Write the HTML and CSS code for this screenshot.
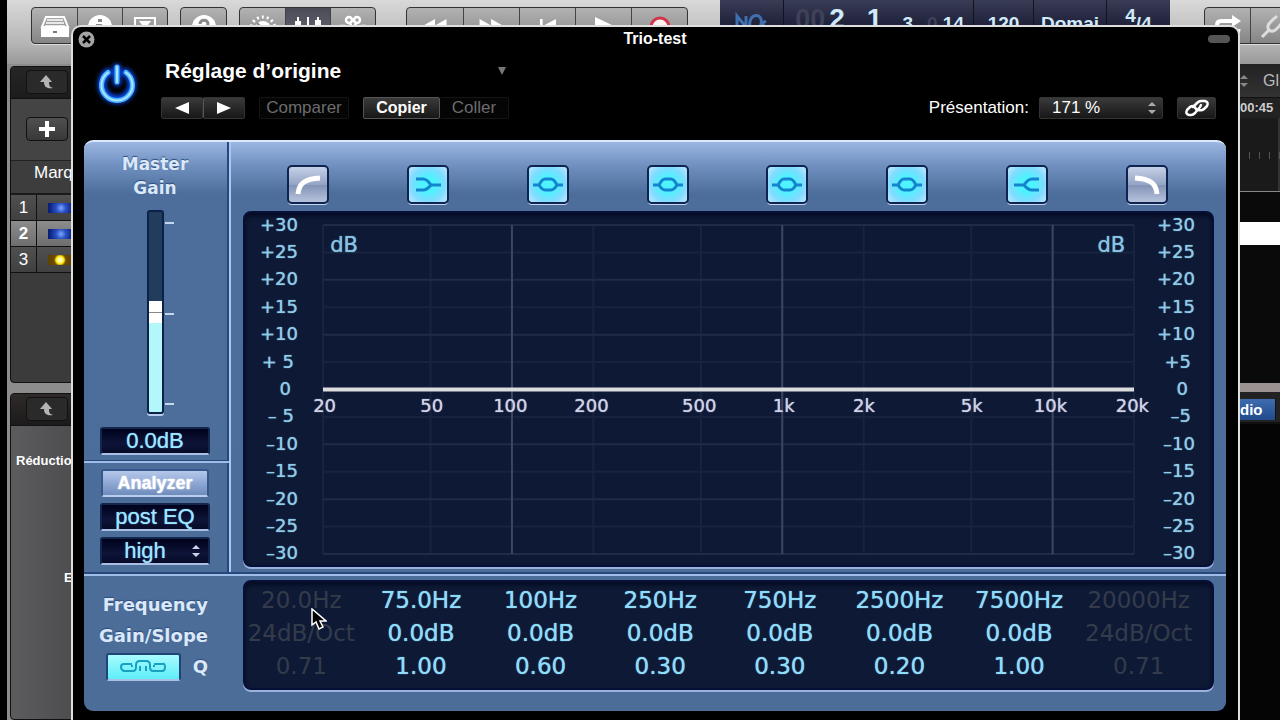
FILE: index.html
```html
<!DOCTYPE html>
<html lang="fr">
<head>
<meta charset="utf-8">
<title>Trio-test</title>
<link rel="stylesheet" href="styles.css">
</head>
<body>
<div class="app">
  <header class="toolbar">
    <div class="group">
      <button class="tool" aria-label="Bibliothèque"><svg width="30" height="24" viewBox="0 0 30 24"><path d="M6 3h18l4 10H2z" fill="none" stroke="#fff" stroke-width="2"/><path d="M7 6h16M6 9h18M5 12h20" stroke="#fff" stroke-width="1.5"/><path d="M1 13h28v10H1z" fill="#fff"/><path d="M13 17h4v2h-4z" fill="#777"/></svg></button>
      <button class="tool" aria-label="Infos"><svg width="26" height="26" viewBox="0 0 26 26"><circle cx="13" cy="14" r="12" fill="#fff"/><path d="M11 6h4v3h-4zM9 11h6v9h-4v-7H9z" fill="#888"/></svg></button>
      <button class="tool" aria-label="Barre d’outils"><svg width="24" height="20" viewBox="0 0 24 20"><path d="M2 2h20v17H2z" fill="none" stroke="#fff" stroke-width="2"/><path d="M6 5h12l-6 8z" fill="#fff"/></svg></button>
    </div>
    <div class="group">
      <button class="tool" aria-label="Aide"><svg width="26" height="26" viewBox="0 0 26 26"><circle cx="13" cy="14" r="12" fill="#fff"/><path d="M9 11c0-5 8-5 8 0 0 3-4 3-4 6" fill="none" stroke="#888" stroke-width="3"/></svg></button>
    </div>
    <div class="group">
      <button class="tool" aria-label="Smart Controls"><svg width="28" height="26" viewBox="0 0 28 26"><circle cx="14" cy="16" r="8" fill="#fff"/><circle cx="14" cy="16" r="12" fill="none" stroke="#fff" stroke-width="3" stroke-dasharray="2 3"/><path d="M8 10l6 6" stroke="#888" stroke-width="2"/></svg></button>
      <button class="tool tool-on" aria-label="Mixer"><svg width="30" height="26" viewBox="0 0 30 26"><path d="M5 4v22M15 4v22M25 4v22" stroke="#fff" stroke-width="2"/><path d="M2 8h6v7H2zM12 13h6v7h-6zM22 7h6v7h-6z" fill="#fff"/></svg></button>
      <button class="tool" aria-label="Éditeurs"><svg width="28" height="26" viewBox="0 0 28 26"><g fill="none" stroke="#fff" stroke-width="2.5"><circle cx="10" cy="7" r="3"/><circle cx="18" cy="7" r="3"/><path d="M11 10l6 14M17 10l-6 14M1 13h5M22 13h5"/></g></svg></button>
    </div>
    <div class="group group-transport">
      <button class="tool" aria-label="Rembobiner"><svg width="28" height="16" viewBox="0 0 28 18"><path d="M0 9L14 1v16zM13 9L27 1v16z" fill="#fff"/></svg></button>
      <button class="tool" aria-label="Avancer"><svg width="28" height="16" viewBox="0 0 28 18"><path d="M14 9L0 1v16zM27 9L13 1v16z" fill="#fff"/></svg></button>
      <button class="tool" aria-label="Début"><svg width="20" height="16" viewBox="0 0 20 18"><path d="M1 1h3v16H1zM4 9L19 1v16z" fill="#fff"/></svg></button>
      <button class="tool" aria-label="Lecture"><svg width="20" height="18" viewBox="0 0 20 18"><path d="M1 0l19 9-19 9z" fill="#fff"/></svg></button>
      <button class="tool" aria-label="Enregistrer"><svg width="22" height="22" viewBox="0 0 22 22"><circle cx="11" cy="12" r="9" fill="#fff2f2" stroke="#d2354a" stroke-width="3"/><circle cx="11" cy="18" r="6" fill="#e4374c"/></svg></button>
    </div>
    <div class="lcd">
      <div class="lcd-cell lcd-mode"><svg width="36" height="26" viewBox="0 0 36 26"><path d="M3 16V4l9 11V4M16 16c-3-16 14-16 11-4l5-3M27 12l5 3" fill="none" stroke="#3f6fae" stroke-width="3"/></svg></div>
      <div class="lcd-cell lcd-position"><span class="lcd-ghost">00</span><span class="lcd-big">2</span><span class="lcd-big lcd-beat">1</span><span class="lcd-small">3</span><span class="lcd-small lcd-end"><span class="lcd-ghost">0</span> 14</span></div>
      <div class="lcd-cell lcd-tempo lcd-small">120</div>
      <div class="lcd-cell lcd-key lcd-small">Domaj</div>
      <div class="lcd-cell lcd-signature"><span>4</span><span class="lcd-small">/4</span></div>
    </div>
    <div class="group group-end">
      <button class="tool" aria-label="Cycle"><svg width="28" height="24" viewBox="0 0 28 24"><path d="M3 16V11q0-4 4-4h12" fill="none" stroke="#fff" stroke-width="4"/><path d="M18 1l9 6-9 6z" fill="#fff"/><path d="M4 20h17q4 0 4-5" fill="none" stroke="#fff" stroke-width="3"/></svg></button>
      <button class="tool" aria-label="Accordeur"><svg width="26" height="26" viewBox="0 0 26 26"><path d="M2 24l7-7M9 17c-4-5 3-9 8-14M9 17c5 4 9-3 14-8" fill="none" stroke="#ddd" stroke-width="3"/></svg></button>
    </div>
  </header>

  <div class="workspace">
    <div class="left-side">
      <section class="tracks">
        <div class="pane-head"><button class="chip" aria-label="Remonter"><svg width="16" height="16" viewBox="0 0 16 16"><path d="M7 1l6 7h-3c0 4 1 5 4 6-6 1-9-1-9-6H1z" fill="#b4b4b4"/></svg></button></div>
        <div class="add-row"><button class="chip chip-add" aria-label="Ajouter une piste"><svg width="18" height="18" viewBox="0 0 18 18"><path d="M9 1v16M1 9h16" stroke="#fff" stroke-width="4"/></svg></button></div>
        <div class="marker-row">Marq</div>
        <div class="track"><span class="track-number">1</span><span class="track-icon"></span></div>
        <div class="track track-on"><span class="track-number">2</span><span class="track-icon"></span></div>
        <div class="track"><span class="track-number">3</span><span class="track-icon track-icon-gold"></span></div>
      </section>
      <section class="inspector">
        <div class="pane-head"><button class="chip" aria-label="Remonter"><svg width="16" height="16" viewBox="0 0 16 16"><path d="M7 1l6 7h-3c0 4 1 5 4 6-6 1-9-1-9-6H1z" fill="#b4b4b4"/></svg></button></div>
        <p class="inspector-text">Réductio</p>
        <p class="inspector-text inspector-text-end">E</p>
      </section>
    </div>
    <div class="right-side">
      <div class="snap"><svg width="8" height="14" viewBox="0 0 8 14"><path d="M0 5l4-4 4 4zM0 9l4 4 4-4z" fill="#888"/></svg><span>Gl</span></div>
      <div class="ruler-time">00:45</div>
      <div class="ruler"></div>
      <div class="lane"></div>
      <div class="lane lane-on"></div>
      <div class="lane lane-empty"></div>
      <div class="divider"></div>
      <div class="tabs"><button class="tab">dio</button></div>
    </div>
  </div>
</div>

<main class="plugin">
  <div class="titlebar">
    <button class="close" aria-label="Fermer"><svg width="17" height="17" viewBox="0 0 17 17"><circle cx="8.500" cy="8.500" r="8" fill="#a4a4a4"/><path d="M5 5l7 7M12 5l-7 7" stroke="#000" stroke-width="2.500"/></svg></button>
    <h1 class="title">Trio-test</h1>
    <button class="pill" aria-label="Réduire"></button>
  </div>

  <div class="controls">
    <button class="power" aria-label="Activer"><svg width="48" height="48" viewBox="0 0 48 48"><g fill="none" stroke-linecap="round"><g class="power-glow"><path d="M24 9v14M15 13.500a15 15 0 1 0 18 0" stroke="#0a50ff" stroke-width="8"/></g><path d="M24 8v15M15 13.500a15.500 15.500 0 1 0 18 0" stroke="#4db4ff" stroke-width="5"/><path d="M24 8v15M15 13.500a15.500 15.500 0 1 0 18 0" stroke="#a8e4ff" stroke-width="2"/></g></svg></button>
    <div class="settings">
      <div class="preset">
        <select class="preset-select" aria-label="Réglage"><option>Réglage d’origine</option></select>
        <svg width="10" height="8" viewBox="0 0 10 8"><path d="M1 0h8L5 8z" fill="#777"/></svg>
      </div>
      <div class="actions">
        <div class="joined">
          <button class="dark nav" aria-label="Précédent"><svg width="14" height="14" viewBox="0 0 14 14"><path d="M14 1v12L0 7z" fill="#fff"/></svg></button>
          <button class="dark nav" aria-label="Suivant"><svg width="14" height="14" viewBox="0 0 14 14"><path d="M0 1v12l14-6z" fill="#fff"/></svg></button>
        </div>
        <button class="dark compare" disabled>Comparer</button>
        <div class="joined">
          <button class="dark copy">Copier</button>
          <button class="dark paste" disabled>Coller</button>
        </div>
        <label class="view-label" for="view">Présentation:</label>
        <div class="view">
          <select class="dark view-select" id="view"><option>171 %</option></select>
          <svg width="8" height="12" viewBox="0 0 8 12"><path d="M0 4l4-4 4 4zM0 8l4 4 4-4z" fill="#aaa"/></svg>
        </div>
        <button class="dark link" aria-label="Lier"><svg width="26" height="18" viewBox="0 0 26 18"><g fill="none" stroke="#fff" stroke-width="2.500" stroke-linecap="round" stroke-linejoin="round"><path d="M9 8l4-4q2-2 4-2h4q4 1 2 5l-3 3q-2 2-6 1"/><path d="M17 6l-1 2-5 6q-2 2-4 2H5q-4-1-2-5l3-3q1-1 4-1l2 3"/></g></svg></button>
      </div>
    </div>
  </div>

  <div class="eq">
    <aside class="side">
      <section class="gain">
        <label class="gain-title" for="gain">Master<br>Gain</label>
        <div class="fader">
          <input class="slider" id="gain" type="range" min="-30" max="30" value="0">
          <div class="ticks"><i></i><i></i><i></i></div>
        </div>
        <input class="field" type="text" size="6" value="0.0dB" aria-label="Master Gain">
      </section>
      <section class="analyzer">
        <button class="analyzer-button">Analyzer</button>
        <button class="field">post EQ</button>
        <div class="resolution">
          <select class="field resolution-select" aria-label="Résolution"><option>high</option></select>
          <svg width="8" height="14" viewBox="0 0 8 14"><path d="M0 5l4-4 4 4zM0 9l4 4 4-4z" fill="#ccd2ea"/></svg>
        </div>
      </section>
    </aside>

    <section class="curve">
      <div class="bands">
        <button class="band" aria-label="Passe-haut"><svg width="28" height="22" viewBox="0 0 28 22"><path d="M4 20C5 9 11 5 26 4" fill="none" stroke="#fff" stroke-width="5"/></svg></button>
        <button class="band band-on" aria-label="Plateau grave"><svg width="28" height="22" viewBox="0 0 28 22"><path d="M2 5h7q4 0 8 6h10M2 16h7q4 0 8-5" fill="none" stroke="#1584cf" stroke-width="3"/></svg></button>
        <button class="band band-on" aria-label="Cloche 1"><svg width="30" height="22" viewBox="0 0 30 22"><path d="M0 11h6q3-6 6-6h6q3 0 6 6h6M6 11q3 5 6 5h6q3 0 6-5" fill="none" stroke="#1584cf" stroke-width="3"/></svg></button>
        <button class="band band-on" aria-label="Cloche 2"><svg width="30" height="22" viewBox="0 0 30 22"><path d="M0 11h6q3-6 6-6h6q3 0 6 6h6M6 11q3 5 6 5h6q3 0 6-5" fill="none" stroke="#1584cf" stroke-width="3"/></svg></button>
        <button class="band band-on" aria-label="Cloche 3"><svg width="30" height="22" viewBox="0 0 30 22"><path d="M0 11h6q3-6 6-6h6q3 0 6 6h6M6 11q3 5 6 5h6q3 0 6-5" fill="none" stroke="#1584cf" stroke-width="3"/></svg></button>
        <button class="band band-on" aria-label="Cloche 4"><svg width="30" height="22" viewBox="0 0 30 22"><path d="M0 11h6q3-6 6-6h6q3 0 6 6h6M6 11q3 5 6 5h6q3 0 6-5" fill="none" stroke="#1584cf" stroke-width="3"/></svg></button>
        <button class="band band-on" aria-label="Plateau aigu"><svg width="28" height="22" viewBox="0 0 28 22"><path d="M26 5h-7q-4 0-8 6H1M26 16h-7q-4 0-8-5" fill="none" stroke="#1584cf" stroke-width="3"/></svg></button>
        <button class="band" aria-label="Passe-bas"><svg width="28" height="22" viewBox="0 0 28 22"><path d="M24 20C23 9 17 5 2 4" fill="none" stroke="#fff" stroke-width="5"/></svg></button>
      </div>
      <div class="graph screen">
        <div class="scale"><span>+30</span><span>+25</span><span>+20</span><span>+15</span><span>+10</span><span class="one">+&nbsp;5</span><span class="zero">0</span><span class="one">–&nbsp;5</span><span>–10</span><span>–15</span><span>–20</span><span>–25</span><span>–30</span></div>
        <div class="plot">
          <svg class="grid">
            <g class="line-faint">
              <line x1="0" x2="100%" y1="8.33%" y2="8.33%"/><line x1="0" x2="100%" y1="25%" y2="25%"/><line x1="0" x2="100%" y1="41.67%" y2="41.67%"/><line x1="0" x2="100%" y1="58.33%" y2="58.33%"/><line x1="0" x2="100%" y1="75%" y2="75%"/><line x1="0" x2="100%" y1="91.67%" y2="91.67%"/>
              <line x1="0" x2="0" y1="0" y2="100%"/><line x1="13.26%" x2="13.26%" y1="0" y2="100%"/><line x1="33.33%" x2="33.33%" y1="0" y2="100%"/><line x1="46.6%" x2="46.6%" y1="0" y2="100%"/><line x1="66.67%" x2="66.67%" y1="0" y2="100%"/><line x1="79.93%" x2="79.93%" y1="0" y2="100%"/><line x1="100%" x2="100%" y1="0" y2="100%"/>
            </g>
            <g class="line-mid">
              <line x1="0" x2="100%" y1="0" y2="0"/><line x1="0" x2="100%" y1="16.67%" y2="16.67%"/><line x1="0" x2="100%" y1="33.33%" y2="33.33%"/><line x1="0" x2="100%" y1="66.67%" y2="66.67%"/><line x1="0" x2="100%" y1="83.33%" y2="83.33%"/><line x1="0" x2="100%" y1="100%" y2="100%"/>
            </g>
            <g class="line-strong">
              <line x1="23.3%" x2="23.3%" y1="0" y2="100%"/><line x1="56.63%" x2="56.63%" y1="0" y2="100%"/><line x1="89.97%" x2="89.97%" y1="0" y2="100%"/>
            </g>
            <line class="response" x1="0" x2="100%" y1="50%" y2="50%"/>
            <g class="hertz">
              <text x="0.2%" y="50%" dy="22">20</text><text x="13.4%" y="50%" dy="22">50</text><text x="23.1%" y="50%" dy="22">100</text><text x="33.1%" y="50%" dy="22">200</text><text x="46.4%" y="50%" dy="22">500</text><text x="56.8%" y="50%" dy="22">1k</text><text x="66.7%" y="50%" dy="22">2k</text><text x="80%" y="50%" dy="22">5k</text><text x="89.7%" y="50%" dy="22">10k</text><text x="99.8%" y="50%" dy="22">20k</text>
            </g>
            <g class="unit"><text x="2.6%" y="27">dB</text><text x="97.2%" y="27">dB</text></g>
          </svg>
        </div>
        <div class="scale"><span>+30</span><span>+25</span><span>+20</span><span>+15</span><span>+10</span><span class="one">+5</span><span class="zero">0</span><span class="one">–5</span><span>–10</span><span>–15</span><span>–20</span><span>–25</span><span>–30</span></div>
      </div>
    </section>

    <section class="row-names">
      <span id="freq">Frequency</span>
      <span id="slope">Gain/Slope</span>
      <div class="q-row">
        <button class="chain" aria-label="Lier gain et Q"><svg width="46" height="14" viewBox="0 0 46 14"><g fill="none" stroke="#17a0bf" stroke-width="2"><path d="M12 4H4q-3 0-3 3t3 4h9q3 0 3-4V5q0-4 4-4h6q4 0 4 4v2q0 4 3 4h9q3 0 3-4t-3-3h-8"/><path d="M12 7V5M20 11V6M26 11V6M34 7V5"/></g></svg></button>
        <span id="q">Q</span>
      </div>
    </section>

    <section class="values">
      <table class="screen">
        <tbody>
          <tr aria-labelledby="freq"><td class="off">20.0Hz</td><td>75.0Hz</td><td>100Hz</td><td>250Hz</td><td>750Hz</td><td>2500Hz</td><td>7500Hz</td><td class="off">20000Hz</td></tr>
          <tr aria-labelledby="slope"><td class="off">24dB/Oct</td><td>0.0dB</td><td>0.0dB</td><td>0.0dB</td><td>0.0dB</td><td>0.0dB</td><td>0.0dB</td><td class="off">24dB/Oct</td></tr>
          <tr aria-labelledby="q"><td class="off">0.71</td><td>1.00</td><td>0.60</td><td>0.30</td><td>0.30</td><td>0.20</td><td>1.00</td><td class="off">0.71</td></tr>
        </tbody>
      </table>
    </section>
  </div>
</main>

<svg class="cursor" width="16" height="22" viewBox="0 0 16 22"><path d="M1 1v16l4-3 3 7 4-2-3-6h6z" fill="#000" stroke="#fff" stroke-width="1.500"/></svg>
</body>
</html>
```
FILE: styles.css
```css
* { box-sizing: border-box; }

body {
  margin: 0;
  min-height: 100vh;
  position: relative;
  overflow: hidden;
  background: #000;
  color: #fff;
  font-family: "Liberation Sans", Arial, sans-serif;
}

button, select, input { font: inherit; color: inherit; margin: 0; padding: 0; border: 0; border-radius: 0; }
button { display: flex; align-items: center; justify-content: center; }
select { appearance: none; }
svg { display: block; flex: none; }

/* Host application */
.app {
  display: flex;
  flex-direction: column;
  min-height: 100vh;
  margin-left: 7px;
  background: #999;
}

.toolbar {
  display: flex;
  align-items: flex-start;
  gap: 12px;
  height: 64px;
  padding-left: 24px;
  overflow: hidden;
  background: linear-gradient(#d9d9d9, #b4b4b4 70%, #989898);
}

.group {
  display: flex;
  flex: none;
  margin-top: 7px;
  border: 1px solid #333;
  border-radius: 4px;
  background: linear-gradient(#b2b2b2, #858585);
  box-shadow: 0 1px 0 #ddd;
}
.group-transport { margin-left: 18px; }
.tool { width: 45px; height: 35px; background: none; }
.tool + .tool { border-left: 1px solid #444; }
.tool-on { background: linear-gradient(#4b4b57, #6a6a78); }
.group-transport .tool { width: 56px; }
.group-end { margin-left: 22px; }

.lcd {
  display: flex;
  flex: 1 0 450px;
  height: 52px;
  margin-left: 20px;
  overflow: hidden;
  background: linear-gradient(#393c55, #1d2038 50%, #14172a);
  color: #cfeafa;
  font-weight: bold;
}
.lcd-cell { display: flex; flex: none; justify-content: center; border-right: 1px solid #11131f; }
.lcd-mode { width: 64px; padding-top: 12px; }
.lcd-position { width: 190px; justify-content: flex-end; padding-right: 9px; }
.lcd-ghost { color: #3d415a; font-size: 27px; line-height: 38px; }
.lcd-big { padding-left: 4px; font-size: 28px; line-height: 38px; }
.lcd-beat { padding: 0 20px 0 22px; }
.lcd-small { font-size: 19px; line-height: 48px; }
.lcd-end { padding-left: 14px; }
.lcd-end .lcd-ghost { font-size: 19px; line-height: 48px; }
.lcd-tempo { width: 60px; }
.lcd-key { width: 73px; }
.lcd-signature { flex: 1; border: 0; font-size: 19px; line-height: 32px; }

.workspace { display: grid; grid-template-columns: 66px 1fr 40px; flex: 1; background: #8c8c8c; }

.left-side { display: grid; grid-template-rows: 317px 1fr; gap: 10px; padding: 2px 0 0 3px; }
.tracks, .inspector { border: 1px solid #111; background: #3b3b3b; border-radius: 4px 0 0 4px; }
.inspector { background: linear-gradient(90deg, #5c5c5e, #4b4b4d); }
.pane-head { display: flex; height: 32px; padding: 3px 15px; background: linear-gradient(#262626, #1c1c1c); border-bottom: 1px solid #111; }
.inspector .pane-head { background: linear-gradient(#2e2a29, #1c1a1a); }
.chip { flex: none; width: 42px; height: 24px; border: 1px solid #111; border-radius: 4px; background: #2a2a2a; }
.chip-add { background: linear-gradient(#505050, #383838); }
.add-row { height: 62px; padding: 18px 15px; background: #444; border-bottom: 1px solid #222; }
.marker-row { height: 34px; padding-left: 23px; font-size: 17px; line-height: 24px; background: #3d3d3d; border-bottom: 2px solid #1a1a1a; }
.track { display: grid; grid-template-columns: 26px 1fr; align-items: stretch; height: 26px; border-bottom: 1px solid #111; background: linear-gradient(#505050, #404040); }
.track-on { background: linear-gradient(#8c8c8c, #6e6e6e); }
.track-number { border-right: 1px solid #111; font-size: 17px; line-height: 26px; text-align: center; }
.track-on .track-number { font-weight: bold; }
.track-icon { height: 10px; margin: 8px 0 0 11px; background: radial-gradient(circle at 13px 5px, #7fa8ff, #2950c4 5px, #0a1f78 12px); }
.track-icon-gold { background: radial-gradient(circle at 12px 5px, #fffbb0 2px, #ffe300 4px, #6a4a00 6px, #4a3300); }
.inspector-text { margin: 26px 0 0 5px; font-size: 13px; line-height: 17px; font-weight: bold; }
.inspector-text-end { margin: 100px 0 0 53px; }

.right-side { display: flex; flex-direction: column; grid-column: 3; overflow: hidden; background: #050505; }
.snap { display: flex; align-items: center; gap: 15px; height: 34px; background: linear-gradient(#222, #333); color: #bbb; font-size: 16px; border-bottom: 1px solid #111; }
.ruler-time { height: 20px; font-size: 13px; font-weight: bold; line-height: 20px; color: #ccc; background: #222; }
.ruler { height: 74px; background: repeating-linear-gradient(90deg, transparent 0 9px, #555 9px 10px) 0 34px / 100% 7px no-repeat, linear-gradient(90deg, transparent 38px, #333 38px) , #1a1a1a; border-bottom: 1px solid #888; }
.lane { height: 30px; background: #0a0a0a; }
.lane-on { height: 23px; background: #fff; }
.lane-empty { height: 138px; }
.divider { height: 9px; background: #9a9392; }
.tabs { height: 32px; padding-top: 7px; background: #222; border-bottom: 2px solid #111; }
.tab { justify-content: flex-start; width: 36px; height: 21px; border-right: 1px solid #111; background: linear-gradient(#3d6db0, #1f4a8c); font-size: 15px; font-weight: bold; }

/* Plug-in window floats above the host */
.plugin {
  position: absolute;
  inset: 25px 40px 0 71px;
  display: flex;
  flex-direction: column;
  padding-bottom: 9px;
  border: 2px solid #dedede;
  border-bottom: 0;
  border-radius: 10px 10px 0 0;
  background: #000;
}

.titlebar { display: grid; grid-template-columns: 24px 1fr 24px; align-items: center; height: 24px; padding: 0 6px 0 5px; }
.close { justify-self: start; background: none; }
.title { margin: 0; font-size: 16px; line-height: 24px; text-align: center; }
.pill { width: 22px; height: 8px; border-radius: 4px; background: #555; }

.controls { display: flex; gap: 20px; padding: 6px 22px 21px 20px; }
.power { flex: none; width: 48px; height: 48px; margin-top: 2px; background: none; }
.power-glow { filter: blur(2px); }
.settings { flex: 1; display: flex; flex-direction: column; gap: 12px; }
.preset { display: grid; grid-template-columns: 344px; align-items: center; padding-left: 4px; }
.preset > * { grid-area: 1 / 1; }
.preset svg { justify-self: end; margin-right: 2px; pointer-events: none; }
.preset-select { height: 26px; margin-bottom: 2px; background: #000; font-size: 21px; font-weight: bold; }

.actions { display: flex; align-items: center; gap: 14px; font-size: 16px; }
.joined { display: flex; }
.dark { height: 22px; border: 1px solid #333; border-radius: 2px; background: linear-gradient(#3a3a3a, #171717); }
.joined .dark + .dark { border-left: 0; }
.dark:disabled { border-color: #151515; background: #050505; color: #6c6c6c; }
.nav { width: 42px; }
.joined .nav + .nav { border-left: 1px solid #555; }
.compare { width: 90px; font-size: 17px; }
.copy { width: 77px; border-color: #555; font-weight: bold; }
.paste { width: 69px; font-size: 17px; }
.view-label { margin-left: auto; font-size: 17px; }
.view { display: grid; grid-template-columns: 124px; align-items: center; margin-left: -4px; }
.view > * { grid-area: 1 / 1; }
.view svg { justify-self: end; margin-right: 7px; pointer-events: none; }
.view-select { padding-left: 12px; font-size: 17px; line-height: 18px; }
.link { width: 39px; }

/* EQ face */
.eq {
  flex: 1;
  display: grid;
  grid-template: minmax(0, 1fr) 137px / 147px 1fr;
  min-height: 0;
  margin: 0 12px 0 11px;
  border-top: 2px solid #dbe7fb;
  border-radius: 9px;
  overflow: hidden;
  background: linear-gradient(#9bb6e2, #6f8fbe 24px, #4d6e9b 52px, #4b6d98);
  font-family: "DejaVu Sans", Verdana, sans-serif;
}

.side { display: grid; grid-template-rows: minmax(0, 1fr) 113px; border-right: 2px solid #a9c8f2; box-shadow: inset -2px 0 0 #27487c; }
.gain, .analyzer { display: flex; flex-direction: column; align-items: center; min-height: 0; padding-right: 3px; }
.gain-title { margin-top: 10px; color: #dbe8fa; font-size: 17px; line-height: 24px; font-weight: bold; text-align: center; text-shadow: 0 -1px 1px #2c4c7c; }
.fader { flex: 1; display: flex; gap: 1px; min-height: 0; margin: 10px 0 13px 10px; }
.slider {
  appearance: none;
  writing-mode: vertical-lr;
  direction: rtl;
  width: 17px;
  height: 100%;
  border: 2px solid #0c2148;
  border-radius: 3px;
  background: linear-gradient(#223c5e 50%, #b2f8fb 50%);
  box-shadow: 0 2px 0 #b9cdee;
}
.slider::-webkit-slider-thumb {
  appearance: none;
  width: 13px;
  height: 22px;
  background: linear-gradient(#fff 11px, #888 11px 12px, #fff 12px);
}
.ticks { display: flex; flex-direction: column; justify-content: space-between; width: 9px; padding: 12px 0 9px; }
.ticks i { height: 2px; background: #c4d6ee; }

.field {
  width: 110px;
  height: 28px;
  border: 2px solid #12264e;
  border-bottom: 2px solid #a9bfe4;
  border-radius: 3px;
  background: linear-gradient(#00021c, #0e1438 60%, #070b28);
  color: #9fe6ff;
  font-family: "Liberation Sans", Arial, sans-serif;
  font-size: 22px;
  line-height: 24px;
  text-align: center;
  text-shadow: 0 0 1px #6fc4ff;
}
.gain .field { margin-bottom: 6px; }
.analyzer { gap: 6px; padding-top: 6px; border-top: 2px solid #a0bdea; box-shadow: 0 -1px 0 #27487c; }
.analyzer-button {
  width: 108px;
  height: 28px;
  border: 2px solid #35578c;
  border-bottom-color: #b9cdee;
  border-radius: 3px;
  background: linear-gradient(#b5c8ea, #8fa8d4 50%, #6f8cbc);
  color: #fff;
  font-family: "Liberation Sans", Arial, sans-serif;
  font-size: 18px;
  font-weight: bold;
  text-shadow: 0 0 2px #fff;
}
.resolution { display: grid; align-items: center; }
.resolution > * { grid-area: 1 / 1; }
.resolution svg { justify-self: end; margin-right: 10px; pointer-events: none; }
.resolution-select { padding-right: 20px; }

.curve { display: flex; flex-direction: column; min-height: 0; padding: 0 12px 7px; }
.bands { display: grid; grid-template-columns: repeat(8, 1fr); justify-items: center; padding: 23px 7px 7px 5px; }
.band {
  width: 42px;
  height: 39px;
  border: 2px solid #0e2350;
  border-radius: 5px;
  background: linear-gradient(#c5d0e6, #94a5c5 50%, #8293b6 52%, #b6c3dc);
  box-shadow: 0 2px 0 -1px #c6d6f0;
}
.band-on { background: radial-gradient(circle, #4ff2ff 30%, #7fdcff 65%, #c3e6ff); }

.screen { border: 2px solid #060f38; border-radius: 8px; background: #0e1a35; box-shadow: 0 2px 0 #9ab2dd, inset 0 3px 4px #050b22; }
.graph { flex: 1; display: grid; grid-template: minmax(0, 1fr) / 53px 1fr 61px; min-height: 0; padding-right: 17px; }
.plot { min-height: 0; margin: 12px 0 11px 25px; }
.grid { width: 100%; height: 100%; overflow: visible; }
.line-faint { stroke: #18243f; stroke-width: 2; }
.line-mid { stroke: #202b45; stroke-width: 2; }
.line-strong { stroke: #3c4662; stroke-width: 2; }
.response { stroke: #dcdcdf; stroke-width: 4; }
.hertz { fill: #cfd2e6; font-size: 18px; text-anchor: middle; text-shadow: 0 0 1px #cfd2e6; }
.unit { fill: #86c4e2; font-size: 21px; text-anchor: middle; text-shadow: 0 0 1px #86c4e2; }
.scale { display: grid; grid-auto-rows: 1fr; align-items: center; margin: -2px 0; color: #8fcbe8; font-size: 18px; line-height: 20px; text-align: right; text-shadow: 0 0 1px #8fcbe8; }
.one { padding-right: 4px; }
.zero { padding-right: 7px; }

.row-names, .values { border-top: 2px solid #a0bdea; box-shadow: 0 -2px 0 #27487c; }
.row-names { display: flex; flex-direction: column; align-items: flex-end; gap: 1px; padding: 14px 23px 0 0; color: #dbe8fa; font-size: 18px; line-height: 30px; font-weight: bold; text-shadow: 0 -1px 1px #2c4c7c; }
.q-row { display: flex; align-items: center; gap: 12px; }
.chain { width: 75px; height: 28px; border: 2px solid #1f4478; border-bottom-color: #a9bfe4; border-radius: 3px; background: linear-gradient(#a8fbff, #5eeef8); }

.values { padding: 4px 12px 21px; }
.values .screen { width: 100%; border-collapse: separate; border-spacing: 0; table-layout: fixed; padding: 2px 10px 5px 0; }
.values td { padding: 0 7px 0 0; height: 33px; color: #8fdcfa; font-size: 23px; line-height: 33px; text-align: center; text-shadow: 0 0 1px #8fdcfa; white-space: nowrap; }
.values .off { color: #343b4b; text-shadow: none; }

.cursor { position: absolute; left: 311px; top: 608px; }
```
